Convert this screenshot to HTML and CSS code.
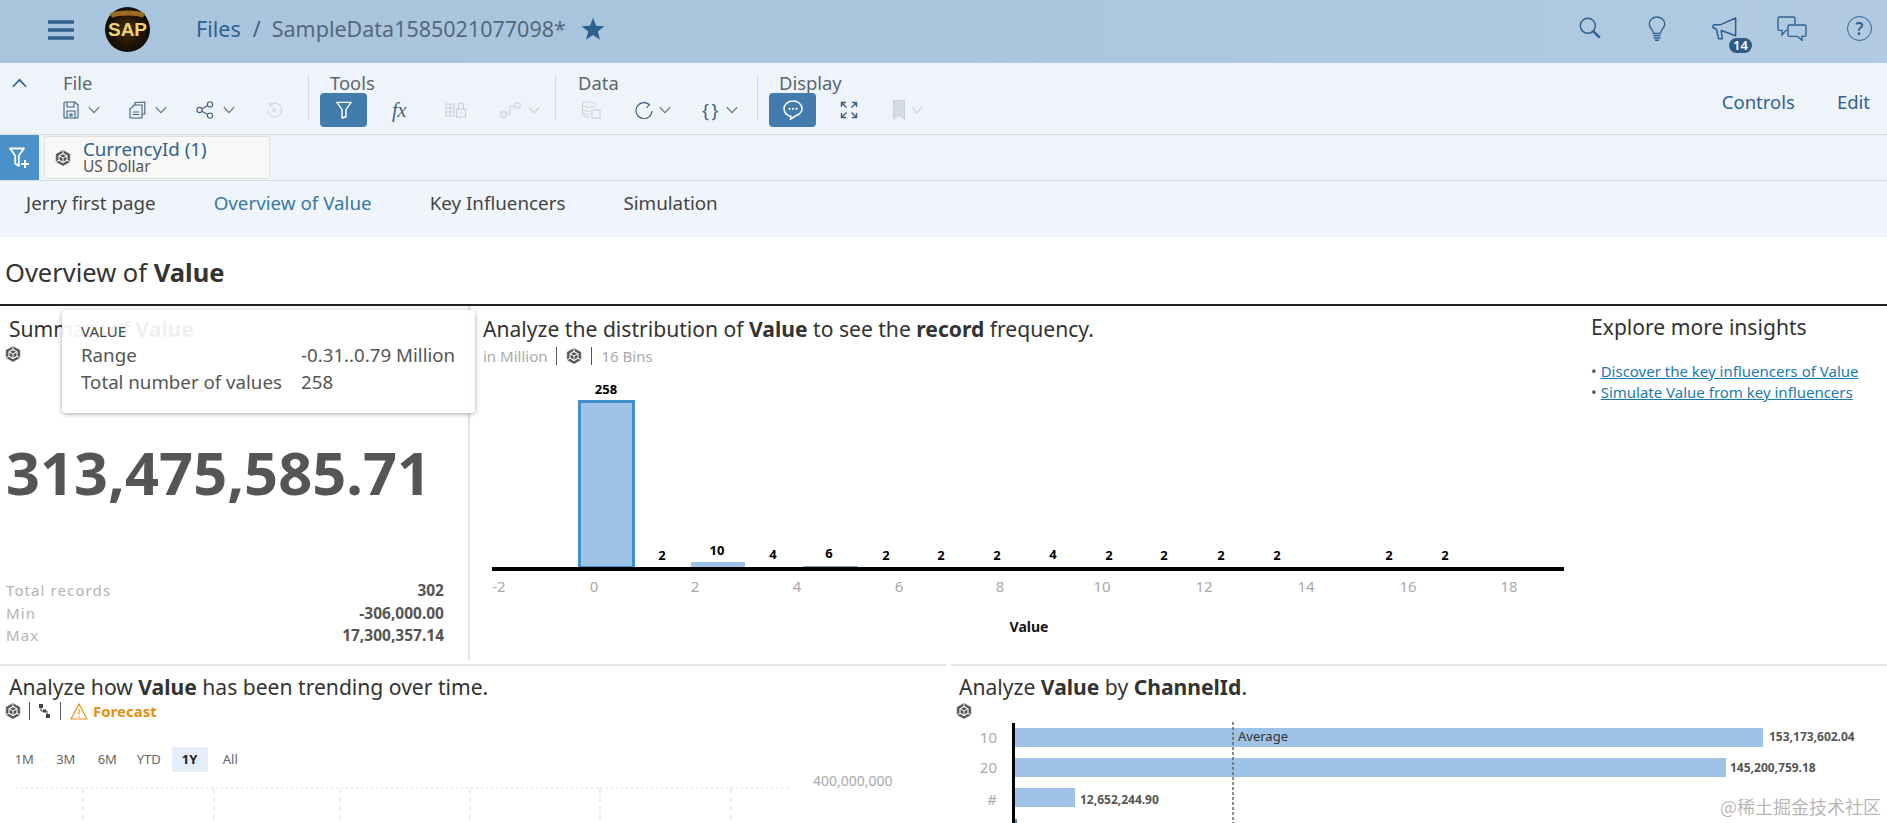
FILE: index.html
```html
<!DOCTYPE html>
<html lang="en">
<head>
<meta charset="utf-8">
<title>SampleData1585021077098</title>
<link rel="stylesheet" href="styles.css">
</head>
<body>
<svg class="defs" width="0" height="0" aria-hidden="true">
  <symbol id="cube" viewBox="0 0 16 16">
    <path d="M8 .4 14.800 4.200V11.800L8 15.600 1.200 11.800V4.200Z" fill="currentColor" stroke="currentColor" stroke-width=".6" stroke-linejoin="round"/>
    <path d="M8 3.400 12 5.700V10.300L8 12.600 4 10.300V5.700Z" fill="none" stroke="#fff" stroke-width="1.100"/>
    <path d="M4 5.700 8 8 12 5.700M8 8V12.600M8 .4V3.400M14.800 11.800 12 10.300M1.200 11.800 4 10.300" stroke="#fff" stroke-width="1" fill="none"/>
  </symbol>
  <symbol id="chev" viewBox="0 0 12 8">
    <path d="M.8 1.200 6 6.600 11.200 1.200" fill="none" stroke="currentColor" stroke-width="1.100"/>
  </symbol>
</svg>

<header class="shell">
  <svg class="hamburger" viewBox="0 0 26 20"><path d="M0 2h26M0 10h26M0 18h26" stroke="currentColor" stroke-width="3.400"/></svg>
  <svg class="logo" viewBox="0 0 45 45">
    <defs>
      <radialGradient id="glow" cx="50%" cy="50%" r="55%">
        <stop offset="0" stop-color="#4a3008"/><stop offset=".6" stop-color="#1f1506"/><stop offset="1" stop-color="#0c0a08"/>
      </radialGradient>
    </defs>
    <circle cx="22.500" cy="22.500" r="22.500" fill="url(#glow)"/>
    <path d="M6 8.500C14 5 31 5 39 8.500" stroke="#9a6c22" stroke-width="5" fill="none"/>
    <text class="logo-text" x="22.500" y="29" text-anchor="middle">SAP</text>
  </svg>
  <nav class="crumbs">
    <span class="crumb-link">Files</span>
    <span class="crumb-sep">/</span>
    <span class="crumb-doc">SampleData1585021077098*</span>
    <svg class="star" viewBox="0 0 24 24"><path d="M12 .8 15 8.800 23.400 9.200 16.800 14.500 19 22.800 12 18.100 5 22.800 7.200 14.500.6 9.200 9 8.800Z" fill="currentColor"/></svg>
  </nav>
  <div class="shell-actions">
    <svg class="sa sa-search" viewBox="0 0 24 24"><circle cx="9.600" cy="9.600" r="8.200" fill="none" stroke="currentColor" stroke-width="1.600"/><path d="M15.600 15.600 22.600 22.600" stroke="currentColor" stroke-width="2.800"/></svg>
    <svg class="sa sa-bulb" viewBox="0 0 18 26"><path d="M5.400 18.200C5.200 14.600 1 12.600 1 8.600 1 4.200 4.600 1 9 1s8 3.200 8 7.600c0 4-4.200 6-4.400 9.600Z" fill="none" stroke="currentColor" stroke-width="1.400"/><path d="M5.400 20.400h7.200M5.400 22.800h7.200M7 25.200h4" stroke="currentColor" stroke-width="1.500"/></svg>
    <span class="megaphone">
      <svg class="sa sa-mega" viewBox="0 0 26 24"><path d="M24.600 1 9 8H2.200C1.400 8 1 8.500 1 9.200V11.200L4.500 12.500 6.800 22.600H10.600L9.600 14 24.600 19.600Z" fill="none" stroke="currentColor" stroke-width="1.600" stroke-linejoin="round"/></svg>
      <span class="badge">14</span>
    </span>
    <svg class="sa sa-chat" viewBox="0 0 30 25"><path d="M18 8V2.400C18 1.600 17.400 1 16.600 1H2.400C1.600 1 1 1.600 1 2.400V13c0 .8.6 1.400 1.400 1.400H5V19L9 14.400H10" fill="none" stroke="currentColor" stroke-width="1.400"/><path d="M12.400 9H27.600c.8 0 1.400.6 1.400 1.400V19c0 .8-.6 1.400-1.400 1.400H25V24.400L20.600 20.400H12.400c-.8 0-1.400-.6-1.400-1.400V10.400C11 9.600 11.600 9 12.400 9Z" fill="none" stroke="currentColor" stroke-width="1.400"/></svg>
    <span class="sa-help"><span class="help-mark">?</span></span>
  </div>
</header>

<section class="toolbar">
  <svg class="collapse" viewBox="0 0 16 10"><path d="M1 9 8 1.600 15 9" fill="none" stroke="currentColor" stroke-width="1.800"/></svg>
  <div class="group g-file">
    <div class="g-label">File</div>
    <div class="g-row">
      <span class="split">
        <svg class="ti w16" viewBox="0 0 16 18"><path d="M2 1H12L15 4V16C15 16.600 14.600 17 14 17H2C1.400 17 1 16.600 1 16V2C1 1.400 1.400 1 2 1ZM4 1V6H11V1M4 17V10H12V17M7 13H9V15H7Z" fill="none" stroke="currentColor" stroke-width="1.100"/></svg>
        <svg class="chev"><use href="#chev"/></svg>
      </span>
      <span class="split">
        <svg class="ti w17" viewBox="0 0 17 18"><path d="M6 4V1.500L15.800 1V13H13M5 4H13V17H1V8ZM4 11H10M4 13.500H10" fill="none" stroke="currentColor" stroke-width="1.100"/></svg>
        <svg class="chev"><use href="#chev"/></svg>
      </span>
      <span class="split">
        <svg class="ti w18" viewBox="0 0 18 18"><circle cx="3.600" cy="9" r="2.600" fill="none" stroke="currentColor" stroke-width="1.100"/><circle cx="14" cy="3.400" r="2.600" fill="none" stroke="currentColor" stroke-width="1.100"/><circle cx="14" cy="14.600" r="2.600" fill="none" stroke="currentColor" stroke-width="1.100"/><path d="M5.900 7.800 11.700 4.600M5.900 10.200 11.700 13.400" stroke="currentColor" stroke-width="1.100"/></svg>
        <svg class="chev"><use href="#chev"/></svg>
      </span>
      <svg class="ti w16 off revert" viewBox="0 0 18 18"><path d="M4.200 3.400A7.800 7.800 0 1 1 2 9.400M4.400 .8V3.800H7.400M6.600 6.600 11.600 11.600M11.600 6.600 6.600 11.600" fill="none" stroke="currentColor" stroke-width="1.100"/></svg>
    </div>
  </div>
  <div class="divider"></div>
  <div class="group g-tools">
    <div class="g-label indent">Tools</div>
    <div class="g-row tools-row">
      <span class="tbtn"><svg class="ti w16 light" viewBox="0 0 18 20"><path d="M1 1.400H17L11.200 9.600V17.600L6.800 19V9.600Z" fill="none" stroke="currentColor" stroke-width="1.600" stroke-linejoin="round"/></svg></span>
      <span class="fx">fx</span>
      <svg class="ti w22 off lock" viewBox="0 0 22 18"><path d="M1 3H9V15H1ZM1 7H9M1 11H9M5 3V15" fill="none" stroke="currentColor" stroke-width="1.100"/><rect x="11.500" y="8" width="9" height="8" fill="none" stroke="currentColor" stroke-width="1.100"/><path d="M13.500 8V4.500a2.500 2.500 0 0 1 5 0V8M16 11V13" fill="none" stroke="currentColor" stroke-width="1.100"/></svg>
      <span class="split narrow">
        <svg class="ti w22 off" viewBox="0 0 22 18"><rect x="1" y="11" width="5" height="5" fill="none" stroke="currentColor" stroke-width="1"/><rect x="15" y="2" width="5" height="5" fill="none" stroke="currentColor" stroke-width="1"/><path d="M6 13H10V5H15" fill="none" stroke="currentColor" stroke-width="1"/></svg>
        <svg class="chev off"><use href="#chev"/></svg>
      </span>
    </div>
  </div>
  <div class="divider"></div>
  <div class="group g-data">
    <div class="g-label">Data</div>
    <div class="g-row data-row">
      <svg class="ti w22 off" viewBox="0 0 22 20"><ellipse cx="9" cy="4" rx="7.500" ry="3" fill="none" stroke="currentColor" stroke-width="1.100"/><path d="M1.500 4V15C1.500 17 5 18 9 18M1.500 8.500C1.500 10 5 11.500 9 11.500M1.500 13C1.500 14.500 5 15 9 15" fill="none" stroke="currentColor" stroke-width="1.100"/><rect x="12" y="10" width="9" height="9" fill="none" stroke="currentColor" stroke-width="1.100"/></svg>
      <span class="split narrow">
        <svg class="ti w18" viewBox="0 0 18 18"><path d="M14 3.400A8 8 0 1 0 17 10M9.500 1 14.500 3.400 11.500 7" fill="none" stroke="currentColor" stroke-width="1.100"/></svg>
        <svg class="chev"><use href="#chev"/></svg>
      </span>
      <span class="split narrow braces-item">
        <span class="braces">{ }</span>
        <svg class="chev"><use href="#chev"/></svg>
      </span>
    </div>
  </div>
  <div class="divider"></div>
  <div class="group g-display">
    <div class="g-label indent">Display</div>
    <div class="g-row display-row">
      <span class="tbtn"><svg class="ti w20 light" viewBox="0 0 20 20"><path d="M10 1C5 1 1 4.300 1 8.800 1 12.800 4.200 15.800 8 16.300 L7.500 19.300 12.500 15.800C16.500 14.600 19 12 19 8.800 19 4.300 15 1 10 1Z" fill="none" stroke="currentColor" stroke-width="1.500"/><circle cx="6.500" cy="8.800" r="1.100" fill="currentColor"/><circle cx="10" cy="8.800" r="1.100" fill="currentColor"/><circle cx="13.500" cy="8.800" r="1.100" fill="currentColor"/></svg></span>
      <svg class="ti w18" viewBox="0 0 18 18"><path d="M1.500 6V1.500H6M1.500 1.500 6.500 6.500M16.500 6V1.500H12M16.500 1.500 11.500 6.500M1.500 12V16.500H6M1.500 16.500 6.500 11.500M16.500 12V16.500H12M16.500 16.500 11.500 11.500" fill="none" stroke="currentColor" stroke-width="1.400"/></svg>
      <span class="split narrow mark">
        <svg class="ti w12 off" viewBox="0 0 12 20"><path d="M.5.500H11.500V19.500L6 15 .5 19.500Z" fill="#d5dde4" stroke="currentColor"/></svg>
        <svg class="chev off"><use href="#chev"/></svg>
      </span>
    </div>
  </div>
  <div class="toolbar-right">
    <span>Controls</span>
    <span>Edit</span>
  </div>
</section>

<section class="filterbar">
  <div class="filter-add">
    <svg class="filter-add-icon" viewBox="0 0 22 22"><path d="M1 1.500H15L9.800 8.500V19L6.200 16.500V8.500Z" fill="none" stroke="currentColor" stroke-width="1.800" stroke-linejoin="round"/><path d="M16 13V21M12 17H20" stroke="currentColor" stroke-width="2"/></svg>
  </div>
  <div class="token">
    <svg class="cube token-cube"><use href="#cube"/></svg>
    <div class="token-text">
      <div class="token-name">CurrencyId (1)</div>
      <div class="token-value">US Dollar</div>
    </div>
  </div>
</section>

<nav class="tabs">
  <span class="tab">Jerry first page</span>
  <span class="tab active">Overview of Value</span>
  <span class="tab">Key Influencers</span>
  <span class="tab">Simulation</span>
</nav>

<h1 class="page-title">Overview of <b>Value</b></h1>

<main class="upper">
  <section class="summary">
    <h2 class="panel-title">Summary of <b>Value</b></h2>
    <div class="meta"><svg class="cube"><use href="#cube"/></svg></div>
    <div class="big">313,475,585.71</div>
    <dl class="stats">
      <div class="stat"><dt>Total records</dt><dd>302</dd></div>
      <div class="stat"><dt>Min</dt><dd>-306,000.00</dd></div>
      <div class="stat"><dt>Max</dt><dd>17,300,357.14</dd></div>
    </dl>
    <div class="tooltip">
      <div class="tip-head">VALUE</div>
      <div class="tip-row"><span class="tip-key">Range</span><span>-0.31..0.79 Million</span></div>
      <div class="tip-row"><span class="tip-key">Total number of values</span><span>258</span></div>
    </div>
  </section>

  <section class="histogram">
    <h2 class="panel-title">Analyze the distribution of <b>Value</b> to see the <b>record</b> frequency.</h2>
    <div class="meta">
      <span class="meta-text">in Million</span>
      <span class="sep"></span>
      <svg class="cube"><use href="#cube"/></svg>
      <span class="sep"></span>
      <span class="meta-text">16 Bins</span>
    </div>
    <svg class="hist-chart" viewBox="470 372 1110 270">
      <rect class="bar-hi" x="579.500" y="401.500" width="54" height="166"/>
      <rect class="bar" x="691" y="562" width="54" height="6"/>
      <rect class="bar-dim" x="803" y="566" width="55" height="2"/>
      <rect class="axis" x="492" y="567" width="1072" height="4"/>
      <g class="hv" text-anchor="middle">
        <text x="606" y="394">258</text><text x="662" y="560">2</text><text x="717" y="555">10</text><text x="773" y="559">4</text><text x="829" y="558">6</text><text x="886" y="560">2</text><text x="941" y="560">2</text><text x="997" y="560">2</text><text x="1053" y="559">4</text><text x="1109" y="560">2</text><text x="1164" y="560">2</text><text x="1221" y="560">2</text><text x="1277" y="560">2</text><text x="1389" y="560">2</text><text x="1445" y="560">2</text>
      </g>
      <g class="tick" text-anchor="middle">
        <text x="499" y="592">-2</text><text x="594" y="592">0</text><text x="695" y="592">2</text><text x="797" y="592">4</text><text x="899" y="592">6</text><text x="1000" y="592">8</text><text x="1102" y="592">10</text><text x="1204" y="592">12</text><text x="1306" y="592">14</text><text x="1408" y="592">16</text><text x="1509" y="592">18</text>
      </g>
      <text class="hist-axis-title" x="1029" y="632" text-anchor="middle">Value</text>
    </svg>
  </section>

  <aside class="insights">
    <h2 class="panel-title">Explore more insights</h2>
    <ul class="links">
      <li><a href="#">Discover the key influencers of Value</a></li>
      <li><a href="#">Simulate Value from key influencers</a></li>
    </ul>
  </aside>
</main>

<div class="lower">
  <section class="trend">
    <h2 class="panel-title">Analyze how <b>Value</b> has been trending over time.</h2>
    <div class="meta">
      <svg class="cube"><use href="#cube"/></svg>
      <span class="sep"></span>
      <svg class="tree" viewBox="0 0 14 16"><path d="M3 3V8H9V12" fill="none" stroke="currentColor" stroke-width="1"/><rect x="1" y="1" width="4" height="4" fill="currentColor"/><rect x="5" y="6.500" width="3" height="3" fill="currentColor"/><rect x="8" y="11" width="4" height="4" fill="currentColor"/></svg>
      <span class="sep"></span>
      <svg class="warn" viewBox="0 0 18 17"><path d="M9 1 17 16H1ZM9 6V11.500M9 13V14.500" fill="none" stroke="currentColor" stroke-width="1.200" stroke-linejoin="round"/></svg>
      <span class="forecast">Forecast</span>
    </div>
    <div class="ranges">
      <span class="range">1M</span><span class="range">3M</span><span class="range">6M</span><span class="range">YTD</span><span class="range on">1Y</span><span class="range">All</span>
    </div>
    <svg class="trend-chart" viewBox="0 775 946 48">
      <path class="grid-h" d="M16 787H790"/>
      <path class="grid-v" d="M83 787V823M214 787V823M340 787V823M470 787V823M600 787V823M731 787V823"/>
      <text class="trend-tick" x="813" y="785">400,000,000</text>
    </svg>
  </section>

  <section class="channel">
    <h2 class="panel-title">Analyze <b>Value</b> by <b>ChannelId</b>.</h2>
    <div class="meta"><svg class="cube"><use href="#cube"/></svg></div>
    <svg class="channel-chart" viewBox="951 722 936 101">
      <rect class="hbar" x="1015" y="728" width="748" height="19"/>
      <rect class="hbar" x="1015" y="758" width="711" height="19"/>
      <rect class="hbar" x="1015" y="788" width="60" height="19"/>
      <rect class="hbar-mini" x="1015" y="819" width="2" height="4"/>
      <rect class="axis" x="1012" y="723" width="3" height="100"/>
      <path class="avg" d="M1233 722V823"/>
      <text class="avg-label" x="1238" y="741">Average</text>
      <g class="tick" text-anchor="end"><text x="997" y="743">10</text><text x="997" y="773">20</text><text x="997" y="805">#</text></g>
      <g class="hval"><text x="1769" y="741">153,173,602.04</text><text x="1730" y="772">145,200,759.18</text><text x="1080" y="804">12,652,244.90</text></g>
    </svg>
  </section>
</div>

<div class="watermark">@稀土掘金技术社区</div>
</body>
</html>
```

FILE: styles.css
```css
* { box-sizing: border-box; }
html, body { margin: 0; height: 823px; overflow: hidden; }
body {
  position: relative;
  background: #fff;
  color: #333;
  font-family: "Noto Sans", "Open Sans", "Liberation Sans", sans-serif;
}
.defs { position: absolute; }
svg { display: block; flex: none; }
b { font-weight: 700; }

/* shell */
.shell {
  height: 63px;
  display: flex;
  align-items: center;
  color: #2f6190;
  background: linear-gradient(90deg, #a9c5de 0%, #aac6df 50%, #b1cae1 100%);
  padding-left: 48px;
}
.hamburger { width: 26px; height: 20px; margin-top: -4px; }
.logo { width: 45px; height: 45px; margin-left: 31px; margin-top: -4px; }
.logo-text { font-size: 19px; font-weight: 700; fill: #ecd27a; font-family: "Liberation Sans", sans-serif; }
.crumbs { display: flex; align-items: center; margin-left: 46px; font-size: 21.500px; margin-top: -6px; }
.crumb-link { color: #2f6190; }
.crumb-sep { color: #3f5f7c; margin-left: 12px; }
.crumb-doc { color: #56677a; margin-left: 11px; }
.star { width: 24px; height: 24px; margin-left: 15px; color: #2f6190; }
.shell-actions {
  margin-left: auto;
  display: flex;
  align-items: center;
  padding-right: 15px;
  margin-top: -7px;
}
.sa-search { width: 22px; height: 22px; }
.sa-bulb { width: 18px; height: 25px; margin-left: 47px; }
.megaphone { position: relative; display: block; margin-left: 46px; }
.sa-mega { width: 25px; height: 23px; }
.badge {
  position: absolute;
  left: 17px;
  top: 21px;
  width: 23px;
  height: 15px;
  border-radius: 8px;
  background: #2c5b87;
  color: #fff;
  font-size: 13px;
  font-weight: 600;
  line-height: 15px;
  text-align: center;
}
.sa-chat { width: 30px; height: 25px; margin-left: 40px; }
.sa-help {
  display: flex;
  align-items: center;
  justify-content: center;
  width: 25px;
  height: 25px;
  margin-left: 40px;
  border: 1.500px solid currentColor;
  border-radius: 50%;
}
.help-mark { font-size: 17px; line-height: 1; font-weight: 600; }

/* toolbar */
.toolbar {
  height: 72px;
  display: flex;
  align-items: flex-start;
  padding-top: 9px;
  background: #eef4fa;
  border-bottom: 1px solid #d6dde4;
  color: #3d5f7d;
  position: relative;
}
.collapse { width: 15px; height: 10px; margin: 6px 0 0 12px; color: #2f6190; }
.group { display: flex; flex-direction: column; }
.g-file { margin-left: 36px; width: 245px; }
.g-tools { margin-left: 11px; width: 235px; }
.g-data { margin-left: 22px; width: 179px; }
.g-display { margin-left: 11px; }
.g-label { font-size: 18.400px; line-height: 22px; color: #5b6670; }
.g-label.indent { padding-left: 10px; }
.g-row { display: flex; align-items: center; height: 34px; gap: 29px; margin-top: -1px; }
.tools-row { gap: 33px; }
.data-row { gap: 33px; padding-left: 2px; }
.braces-item { margin-left: -2px; }
.display-row { gap: 24px; }
.revert { margin-left: 2px; }
.lock { margin-left: 4px; }
.mark { margin-left: 11px; }
.split { display: flex; align-items: center; gap: 9px; }
.split.narrow { gap: 6px; }
.divider { width: 1px; height: 45px; margin-top: 3px; background: #d3dbe2; }
.ti { color: #3d5f7d; }
.off, .ti.off { color: #c8d1d8; }
.light, .ti.light { color: #fff; }
.w12 { width: 12px; height: 20px; }
.w16 { width: 16px; height: 18px; }
.w17 { width: 17px; height: 18px; }
.w18 { width: 18px; height: 18px; }
.w20 { width: 20px; height: 20px; }
.w22 { width: 22px; height: 18px; }
.chev { width: 12px; height: 8px; color: #4f6f8c; }
.chev.off { color: #c8d1d8; }
.tbtn {
  display: flex;
  align-items: center;
  justify-content: center;
  width: 47px;
  height: 34px;
  border-radius: 4px;
  background: #427cac;
}
.fx { font: italic 20px "Liberation Serif", serif; color: #3d5f7d; margin-left: -8px; width: 16px; }
.braces { font-size: 18px; line-height: 1; letter-spacing: -1px; color: #3d5f7d; width: 18px; white-space: nowrap; }
.toolbar-right {
  margin-left: auto;
  display: flex;
  gap: 42px;
  padding: 18px 17px 0 0;
  font-size: 18.500px;
  line-height: 24px;
  color: #2f6190;
}

/* filter bar */
.filterbar {
  height: 46px;
  display: flex;
  align-items: stretch;
  background: #eef4fa;
  border-bottom: 1px solid #d6dde4;
}
.filter-add {
  width: 39px;
  background: #4a90c9;
  color: #fff;
  display: flex;
  align-items: center;
  justify-content: center;
}
.filter-add-icon { width: 22px; height: 22px; }
.token {
  width: 226px;
  margin: 1px 0 1px 5px;
  display: flex;
  align-items: center;
  background: #f8f8f6;
  border: 1px solid #e2e2e0;
  border-radius: 2px;
}
.token-cube { margin-left: 10px; color: #222; width: 20px; height: 20px; }
.token-text { margin-left: 12px; margin-top: -2px; }
.token-name { font-size: 18.700px; line-height: 20px; color: #2f6190; }
.token-value { font-size: 15.500px; line-height: 15px; color: #555; }

/* tabs */
.tabs {
  height: 56px;
  display: flex;
  align-items: center;
  padding: 0 0 13px 26px;
  gap: 58px;
  background: #eff5fa;
  font-size: 18.800px;
  color: #444;
}
.tab.active { color: #3b78a8; }

.page-title {
  margin: 0;
  padding: 20px 0 0 5px;
  font-size: 25.500px;
  line-height: 30px;
  font-weight: 400;
  color: #333;
  border-bottom: 2px solid #222;
  box-sizing: content-box;
  height: 47px;
}

/* panels */
.upper { display: grid; grid-template-columns: 470px 1110px 307px; height: 358px; }
.panel-title { margin: 0; font-size: 21.100px; line-height: 26px; font-weight: 400; color: #333; white-space: nowrap; }
.meta { display: flex; align-items: center; height: 16px; margin-top: 4px; gap: 9px; color: #666; }
.cube { width: 16px; height: 16px; color: #555; }
.meta-text { font-size: 15px; color: #aaa; }
.sep { width: 1px; height: 18px; background: #555; }

.summary {
  position: relative;
  height: 354px;
  padding: 10px 0 0 9px;
  border-right: 2px solid #e2e2e2;
}
.summary .meta { margin-left: -4px; }
.big { margin: 75px 0 0 -3px; font-size: 59.500px; line-height: 70px; font-weight: 700; color: #555; white-space: nowrap; }
.stats { margin: 72px 24px 0 -3px; }
.stat { display: flex; justify-content: space-between; align-items: center; height: 22.500px; }
.stat dt { font-size: 15px; letter-spacing: 1.100px; color: #b3b3b3; }
.stat dd { margin: 0; font-size: 15.500px; font-weight: 700; color: #555; }
.tooltip {
  position: absolute;
  left: 62px;
  top: 4px;
  width: 413px;
  height: 103px;
  padding: 12px 0 0 19px;
  background: rgba(255, 255, 255, .93);
  border-radius: 4px;
  box-shadow: 0 1px 5px rgba(0, 0, 0, .35);
}
.tip-head { font-size: 15px; line-height: 19px; color: #444; }
.tip-row { display: flex; font-size: 18.700px; line-height: 27px; color: #555; }
.tip-key { width: 220px; }

.histogram { padding: 10px 0 0 13px; }
.histogram .meta { margin-top: 6px; }
.hist-chart { width: 1110px; height: 270px; margin: 8px 0 0 -13px; }
.bar-hi { fill: #9fc3e6; stroke: #3f8fcc; stroke-width: 3; }
.bar { fill: #9fc3e6; }
.bar-dim { fill: #7fa5c9; }
.axis { fill: #000; }
.hv text { font-size: 13px; font-weight: 700; fill: #000; }
.tick, .tick text { font-size: 15px; fill: #aaa; }
.trend-tick { font-size: 14px; fill: #aaa; }
.hist-axis-title { font-size: 14px; font-weight: 700; fill: #111; }

.insights { padding: 8px 0 0 11px; }
.links { list-style: none; margin: 21px 0 0; padding: 0; font-size: 15px; line-height: 21px; }
.links li::before { content: "•"; color: #555; margin-right: 4px; }
.links a { color: #1a7ab0; }

.lower { display: grid; grid-template-columns: 946px 936px; gap: 5px; height: 159px; overflow: hidden; }
.trend, .channel { border-top: 2px solid #e5e5e5; padding: 8px 0 0 9px; }
.trend .meta { margin-left: -4px; margin-top: 3px; gap: 8px; }
.tree { width: 14px; height: 16px; color: #444; }
.warn { width: 18px; height: 17px; color: #e6900f; margin-left: 1px; }
.forecast { font-size: 15px; font-weight: 700; color: #e6900f; margin-left: -3px; }
.ranges { display: flex; align-items: center; height: 25px; margin: 28px 0 0 -9px; padding-left: 3.500px; font-size: 13px; color: #666; }
.range { width: 41.500px; height: 25px; line-height: 25px; text-align: center; }
.range.on { width: 36px; margin: 0 2px; background: #e3eef8; font-weight: 700; color: #222; }
.trend-chart { width: 946px; height: 48px; margin: 4px 0 0 -9px; }
.grid-h { stroke: #ddd; stroke-dasharray: 2 3; fill: none; }
.grid-v { stroke: #ddd; stroke-dasharray: 5 4; fill: none; }

.channel { padding-left: 8px; }
.channel .meta { margin-left: -3px; margin-top: 3px; }
.channel-chart { width: 936px; height: 101px; margin: 3px 0 0 -8px; }
.hbar { fill: #9fc3e6; }
.hbar-mini { fill: #3f8fcc; }
.avg { stroke: #666; stroke-width: 1.500; stroke-dasharray: 3 2; fill: none; }
.avg-label { font-size: 13px; fill: #333; }
.hval text { font-size: 12px; font-weight: 700; fill: #555; }

.watermark {
  position: absolute;
  right: 6px;
  bottom: 4px;
  font: 18px "Noto Sans CJK SC", sans-serif;
  color: rgba(150, 150, 150, .7);
}
```
